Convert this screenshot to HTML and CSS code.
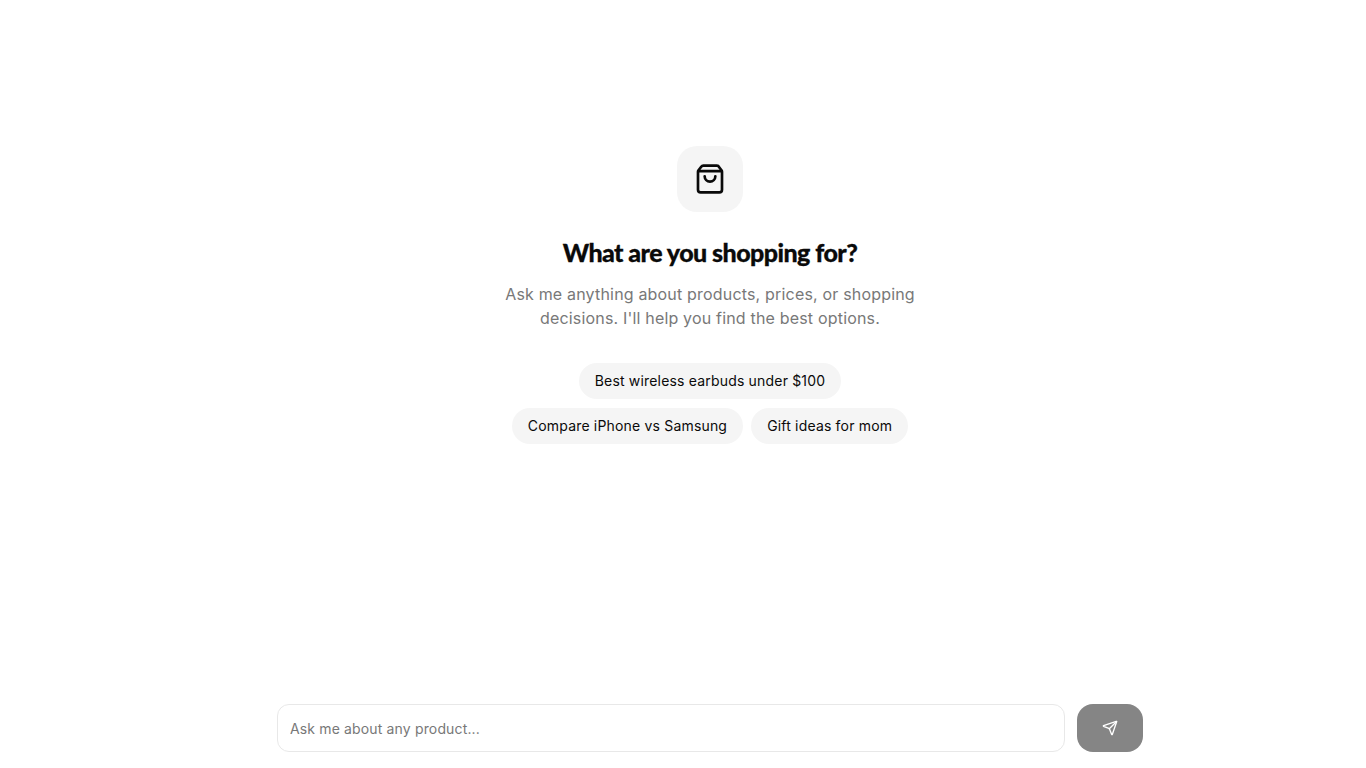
FILE: index.html
```html
<!DOCTYPE html>
<html lang="en">

<head>
    <meta charset="UTF-8">
    <meta name="viewport" content="width=device-width, initial-scale=1.0">
    <title>Shopping assistant</title>
    <link rel="stylesheet" href="styles.css">
</head>

<body>
    <div class="page">
        <div class="welcome">
            <div class="icon-box">
                <svg width="32" height="32" viewBox="0 0 24 24" fill="none" stroke="currentColor" stroke-width="2" stroke-linecap="round" stroke-linejoin="round">
                    <path d="M16 10a4 4 0 0 1-8 0"></path>
                    <path d="M3.103 6.034h17.794"></path>
                    <path d="M3.4 5.467a2 2 0 0 0-.4 1.2V20a2 2 0 0 0 2 2h14a2 2 0 0 0 2-2V6.667a2 2 0 0 0-.4-1.2l-2.4-3.2A2 2 0 0 0 17 2H7a2 2 0 0 0-1.6.8z"></path>
                </svg>
            </div>
            <h1 class="title">What are you shopping for?</h1>
            <p class="desc">Ask me anything about products, prices, or shopping decisions. I'll help you find the best options.</p>
            <div class="chips">
                <button class="chip">Best wireless earbuds under $100</button>
                <button class="chip">Compare iPhone vs Samsung</button>
                <button class="chip">Gift ideas for mom</button>
            </div>
        </div>

        <form class="composer">
            <input class="composer-input" type="text" placeholder="Ask me about any product...">
            <button class="send-btn" type="button">
                <svg width="16" height="16" viewBox="0 0 24 24" fill="none" stroke="currentColor" stroke-width="2" stroke-linecap="round" stroke-linejoin="round">
                    <path d="M14.536 21.686a.5.5 0 0 0 .937-.024l6.5-19a.496.496 0 0 0-.635-.635l-19 6.5a.5.5 0 0 0-.024.937l7.93 3.18a2 2 0 0 1 1.112 1.11z"></path>
                    <path d="m21.854 2.147-10.94 10.939"></path>
                </svg>
            </button>
        </form>
    </div>
</body>

</html>
```

FILE: styles.css
```css
* {
    padding: 0;
    margin: 0;
    box-sizing: border-box;
}

body {
    background-color: #fff;
    color: #0a0a0a;
    font-family: Inter, "Liberation Sans", sans-serif;
}

.page {
    height: 768px;
    padding: 146px 0 16px 54px;
    display: flex;
    flex-direction: column;
    align-items: center;
    justify-content: space-between;
}

.welcome {
    display: flex;
    flex-direction: column;
    align-items: center;
}

.icon-box {
    width: 66px;
    height: 66px;
    border-radius: 20px;
    background-color: #f5f5f5;
    display: flex;
    align-items: center;
    justify-content: center;
    margin-bottom: 24px;
}

.title {
    font-family: Lato, "Liberation Sans", sans-serif;
    font-size: 25px;
    line-height: 32px;
    font-weight: 900;
    letter-spacing: -0.55px;
    -webkit-text-stroke: 0.3px #0a0a0a;
    margin-bottom: 14px;
}

.desc {
    width: 448px;
    font-size: 16px;
    line-height: 24px;
    letter-spacing: 0.18px;
    color: #787878;
    text-align: center;
    margin-bottom: 33px;
}

.chips {
    width: 448px;
    display: flex;
    flex-wrap: wrap;
    justify-content: center;
    gap: 9px 8px;
}

.chip {
    height: 36px;
    padding: 0 16px 2px;
    border: none;
    border-radius: 18px;
    background-color: #f5f5f5;
    color: #0a0a0a;
    font-family: inherit;
    font-size: 14px;
    letter-spacing: 0.18px;
}

.composer {
    width: 866px;
    display: flex;
    gap: 12px;
}

.composer-input {
    flex: 1;
    height: 48px;
    padding: 0 12px;
    border: 1px solid #e8e8e8;
    border-radius: 12px;
    background-color: #fff;
    font-family: inherit;
    font-size: 14px;
    letter-spacing: 0.15px;
    outline: none;
}

.composer-input::placeholder {
    color: #787878;
}

.send-btn {
    width: 66px;
    height: 48px;
    border: none;
    border-radius: 16px;
    background-color: #858585;
    color: #fff;
    display: flex;
    align-items: center;
    justify-content: center;
}
```
